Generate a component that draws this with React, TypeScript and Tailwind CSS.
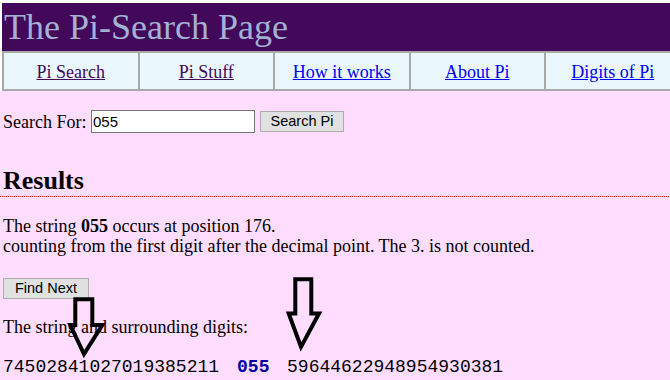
import React from "react";

const serif = "font-['Liberation_Serif','Times_New_Roman',serif]";

function NavCell({ label, visited }: { label: string; visited?: boolean }) {
  return (
    <div className="flex-none w-[135.5px] h-full flex items-center justify-center border-r-2 border-[#a9a9a9]">
      <a
        href="#"
        className={`underline text-[18px] leading-[20px] pt-[1px] ${visited ? "text-[#3f0a5c]" : "text-[#0000ff]"}`}
      >
        {label}
      </a>
    </div>
  );
}

function Arrows() {
  return (
    <svg
      className="absolute left-0 top-0 pointer-events-none"
      width={670}
      height={380}
      viewBox="0 0 670 380"
    >
      <path
        d="M75.3 299.3 L92.3 299.3 L92.3 325 L102.3 325 L84 354 L70.3 325 L75.3 325 Z"
        fill="none"
        stroke="#000"
        strokeWidth={4}
        strokeLinejoin="miter"
      />
      <path
        d="M295.3 279.3 L311.3 279.3 L311.3 313.5 L319 313.5 L301 347 L288.7 313.5 L295.3 313.5 Z"
        fill="none"
        stroke="#000"
        strokeWidth={4}
        strokeLinejoin="miter"
      />
    </svg>
  );
}

export default function App() {
  return (
    <div className={`relative w-[670px] h-[380px] overflow-hidden bg-[#ffddff] text-black ${serif}`}>
      {/* header */}
      <div className="bg-white pt-[3px] pl-[2px]">
        <div className="bg-[#42085a] h-[48px] pl-[2px] text-[36px] leading-[48px] text-[#a3b2d2] whitespace-nowrap">
          The Pi-Search Page
        </div>
        <div className="flex h-[40px] w-[700px] bg-[#eaf8fe] border-t-2 border-b-2 border-l-2 border-[#a9a9a9]">
          <NavCell label="Pi Search" visited />
          <NavCell label="Pi Stuff" visited />
          <NavCell label="How it works" />
          <NavCell label="About Pi" />
          <NavCell label="Digits of Pi" />
        </div>
      </div>

      {/* main */}
      <div className="pl-[3px]">
        <div className="mt-[19px] flex items-center h-[23px]">
          <span className="text-[18px] leading-[23px] pt-[1px] whitespace-nowrap">Search For:</span>
          <input
            readOnly
            value="055"
            className="ml-[4.5px] w-[164px] h-[23px] bg-white border border-[#767676] pl-[1px] text-[15px] font-['Liberation_Sans',Arial,sans-serif] text-black outline-none"
          />
          <button className="ml-[5px] w-[84px] h-[21px] bg-[#e1e1e1] border border-[#adadad] text-[14.5px] leading-[19px] font-['Liberation_Sans',Arial,sans-serif] text-black">
            Search Pi
          </button>
        </div>

        <h2 className="mt-[32px] text-[26px] leading-[31px] font-bold">Results</h2>
        <div className="-ml-[3px] h-px bg-[repeating-linear-gradient(90deg,#ff0000_0px,#ff0000_1px,transparent_1px,transparent_2px)]" />

        <p className="mt-[19px] text-[18px] leading-[20px]">
          The string <b>055</b> occurs at position 176.
          <br />
          counting from the first digit after the decimal point. The 3. is not counted.
        </p>

        <button className="mt-[22px] block w-[86px] h-[21px] bg-[#e1e1e1] border border-[#adadad] text-[14.5px] leading-[19px] font-['Liberation_Sans',Arial,sans-serif] text-black">
          Find Next
        </button>

        <p className="mt-[18px] text-[18px] leading-[20px]">The string and surrounding digits:</p>

        <div className="mt-[20px] flex text-[18px] leading-[20px] font-['Liberation_Mono','Courier_New',monospace] whitespace-nowrap">
          <span>74502841027019385211</span>
          <span className="ml-[18px] mr-[17.6px] font-bold text-[#0000a0]">055</span>
          <span>59644622948954930381</span>
        </div>
      </div>

      <Arrows />
    </div>
  );
}
